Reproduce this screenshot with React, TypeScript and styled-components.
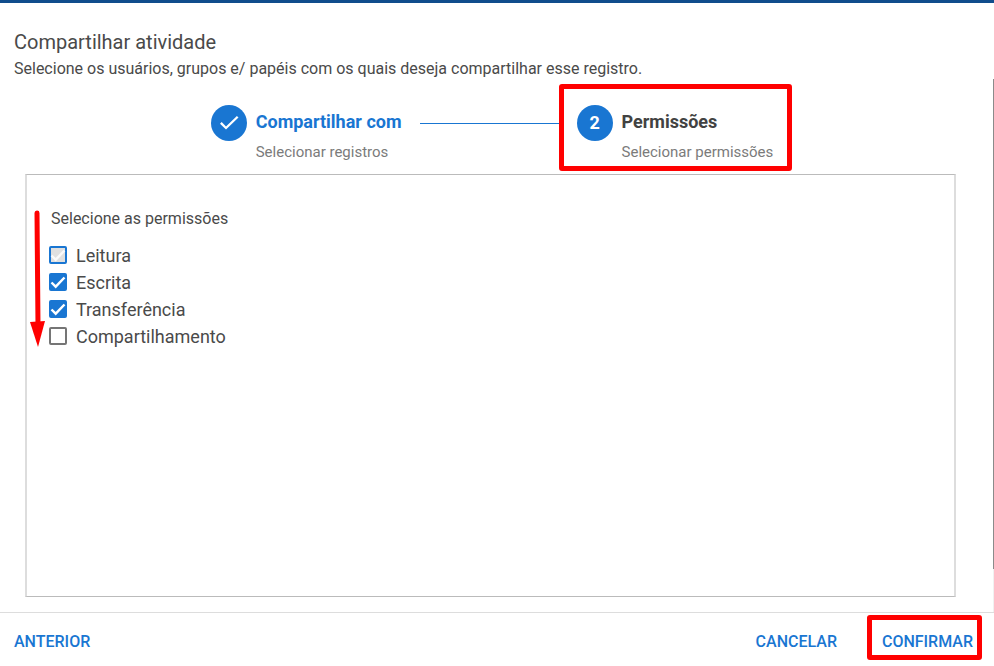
import React, { useState } from "react";
import styled, { createGlobalStyle, css } from "styled-components";

const blue = "#1976d2";
const ink = "#424242";
const softInk = "#4a4a4a";

const GlobalStyle = createGlobalStyle`
  *, *::before, *::after { box-sizing: border-box; }
  body {
    margin: 0;
    background: #fff;
    color: ${softInk};
    font-family: Roboto, "Liberation Sans", sans-serif;
  }
`;

const Dialog = styled.main`
  display: flex;
  flex-direction: column;
  min-height: 100vh;
  border-top: 3px solid #104d8c;
`;

const Header = styled.header`
  padding: 27px 14px 0;
`;

const Title = styled.h1`
  margin: 0 0 5px;
  font-size: 20px;
  font-weight: 400;
  line-height: 24px;
`;

const Subtitle = styled.p`
  margin: 0;
  font-size: 16px;
  line-height: 20px;
`;

const Body = styled.div`
  position: relative;
  flex: 1;
  display: flex;
  flex-direction: column;
  padding: 26px 38px 15px 25px;
`;

const ScrollTrack = styled.div`
  position: absolute;
  top: 0;
  right: 0;
  bottom: 0;
  width: 1px;
  background: #f1f1f1;
`;

const ScrollThumb = styled.div`
  height: 92%;
  background: #8b8b8b;
`;

const Stepper = styled.ol`
  display: flex;
  justify-content: center;
  margin: 0 0 12px;
  padding: 0 0 0 3px;
  list-style: none;
`;

const Step = styled.li`
  position: relative;
  display: grid;
  grid-template-columns: 36px auto;
  grid-template-rows: 36px 20px;
  column-gap: 9px;
  row-gap: 1px;
  align-items: center;
`;

const StepBadge = styled.span`
  display: grid;
  place-items: center;
  width: 36px;
  height: 36px;
  border-radius: 50%;
  background: ${blue};
  color: #fff;
  font-size: 18px;
  font-weight: 700;
  line-height: 20px;
`;

const StepLabel = styled.span<{ $done?: boolean }>`
  padding-bottom: 2px;
  font-size: 18px;
  font-weight: 700;
  line-height: 20px;
  color: ${(p) => (p.$done ? blue : ink)};
`;

const StepHint = styled.span`
  grid-column: 2;
  font-size: 15px;
  line-height: 20px;
  color: #7b7b7b;
`;

const Connector = styled.li`
  flex: 0 0 139px;
  height: 1px;
  margin: 18px 18px 0;
  background: ${blue};
`;

const highlight = css`
  content: "";
  position: absolute;
  border: 5px solid #f00;
  border-radius: 3px;
  pointer-events: none;
`;

const MarkedStep = styled(Step)`
  &::after {
    ${highlight}
    inset: -21px -19px -9px -18px;
  }
`;

const Panel = styled.section`
  position: relative;
  flex: 1;
  padding: 34px 22px;
  border: solid #bbb;
  border-width: 1px 2px;
  border-left-color: #ddd;
  border-right-color: #ddd;
`;

const Permissions = styled.fieldset`
  margin: 0;
  padding: 0;
  border: 0;
`;

const Legend = styled.legend`
  margin-bottom: 13px;
  padding: 0 2px;
  font-size: 16px;
  line-height: 20px;
`;

const Option = styled.label`
  display: flex;
  align-items: center;
  gap: 9px;
  height: 27px;
  font-size: 18px;
`;

const CheckCell = styled.span`
  display: grid;
  width: 18px;
  height: 18px;
  margin-bottom: 1px;

  & > * {
    grid-area: 1 / 1;
  }
`;

const Checkbox = styled.input`
  appearance: none;
  width: 18px;
  height: 18px;
  margin: 0;
  border: 2px solid #757575;
  border-radius: 2px;
  background: #fff;

  &:checked {
    border-color: ${blue};
    background: ${blue};
  }

  &:disabled {
    background: #e0e0e0;
  }

  & + svg {
    visibility: hidden;
    pointer-events: none;
  }

  &:checked + svg {
    visibility: visible;
  }
`;

const Arrow = styled.svg`
  position: absolute;
  top: 35px;
  left: 3px;
`;

const Footer = styled.footer`
  display: flex;
  justify-content: space-between;
  padding: 19px 21px 14px 14px;
  border-top: 1px solid #ddd;
`;

const Actions = styled.div`
  display: flex;
  gap: 45px;
`;

const TextButton = styled.button`
  position: relative;
  padding: 0;
  border: 0;
  background: none;
  color: ${blue};
  font-family: inherit;
  font-size: 16px;
  font-weight: 500;
  line-height: 20px;
  cursor: pointer;
`;

const MarkedButton = styled(TextButton)`
  &::after {
    ${highlight}
    inset: -17px -9px -8px -15px;
  }
`;

const initial = [
  { name: "Leitura", checked: true, locked: true },
  { name: "Escrita", checked: true, locked: false },
  { name: "Transferência", checked: true, locked: false },
  { name: "Compartilhamento", checked: false, locked: false },
];

export default function App() {
  const [options, setOptions] = useState(initial);
  const toggle = (name: string) =>
    setOptions((list) => list.map((o) => (o.name === name ? { ...o, checked: !o.checked } : o)));

  return (
    <Dialog>
      <GlobalStyle />
      <Header>
        <Title>Compartilhar atividade</Title>
        <Subtitle>Selecione os usuários, grupos e/ papéis com os quais deseja compartilhar esse registro.</Subtitle>
      </Header>
      <Body>
        <Stepper>
          <Step>
            <StepBadge>
              <svg width="24" height="24" viewBox="0 0 24 24" fill="#fff" aria-hidden="true">
                <path d="M9 15.4 4.7 11.1 3 12.8 9 18.6 21.5 6.6 19.9 5z" />
              </svg>
            </StepBadge>
            <StepLabel $done>Compartilhar com</StepLabel>
            <StepHint>Selecionar registros</StepHint>
          </Step>
          <Connector aria-hidden="true" />
          <MarkedStep aria-current="step">
            <StepBadge>2</StepBadge>
            <StepLabel>Permissões</StepLabel>
            <StepHint>Selecionar permissões</StepHint>
          </MarkedStep>
        </Stepper>
        <Panel>
          <Permissions>
            <Legend>Selecione as permissões</Legend>
            {options.map((o) => (
              <Option key={o.name}>
                <CheckCell>
                  <Checkbox type="checkbox" checked={o.checked} disabled={o.locked} onChange={() => toggle(o.name)} />
                  <svg width="18" height="18" viewBox="0 0 18 18" fill="none" aria-hidden="true">
                    <path d="M2.5 9.5 6.7 13.7 15.5 4.5" stroke={o.locked ? "#fafafa" : "#fff"} strokeWidth="2.4" />
                  </svg>
                </CheckCell>
                {o.name}
              </Option>
            ))}
          </Permissions>
          <Arrow width="17" height="138" viewBox="0 0 17 138" aria-hidden="true">
            <path d="M7 3 8 115" stroke="#f00" strokeWidth="5" strokeLinecap="round" />
            <path d="M0 112 15 111 8 137z" fill="#f00" />
          </Arrow>
        </Panel>
        <ScrollTrack aria-hidden="true">
          <ScrollThumb />
        </ScrollTrack>
      </Body>
      <Footer>
        <TextButton type="button">ANTERIOR</TextButton>
        <Actions>
          <TextButton type="button">CANCELAR</TextButton>
          <MarkedButton type="button">CONFIRMAR</MarkedButton>
        </Actions>
      </Footer>
    </Dialog>
  );
}
